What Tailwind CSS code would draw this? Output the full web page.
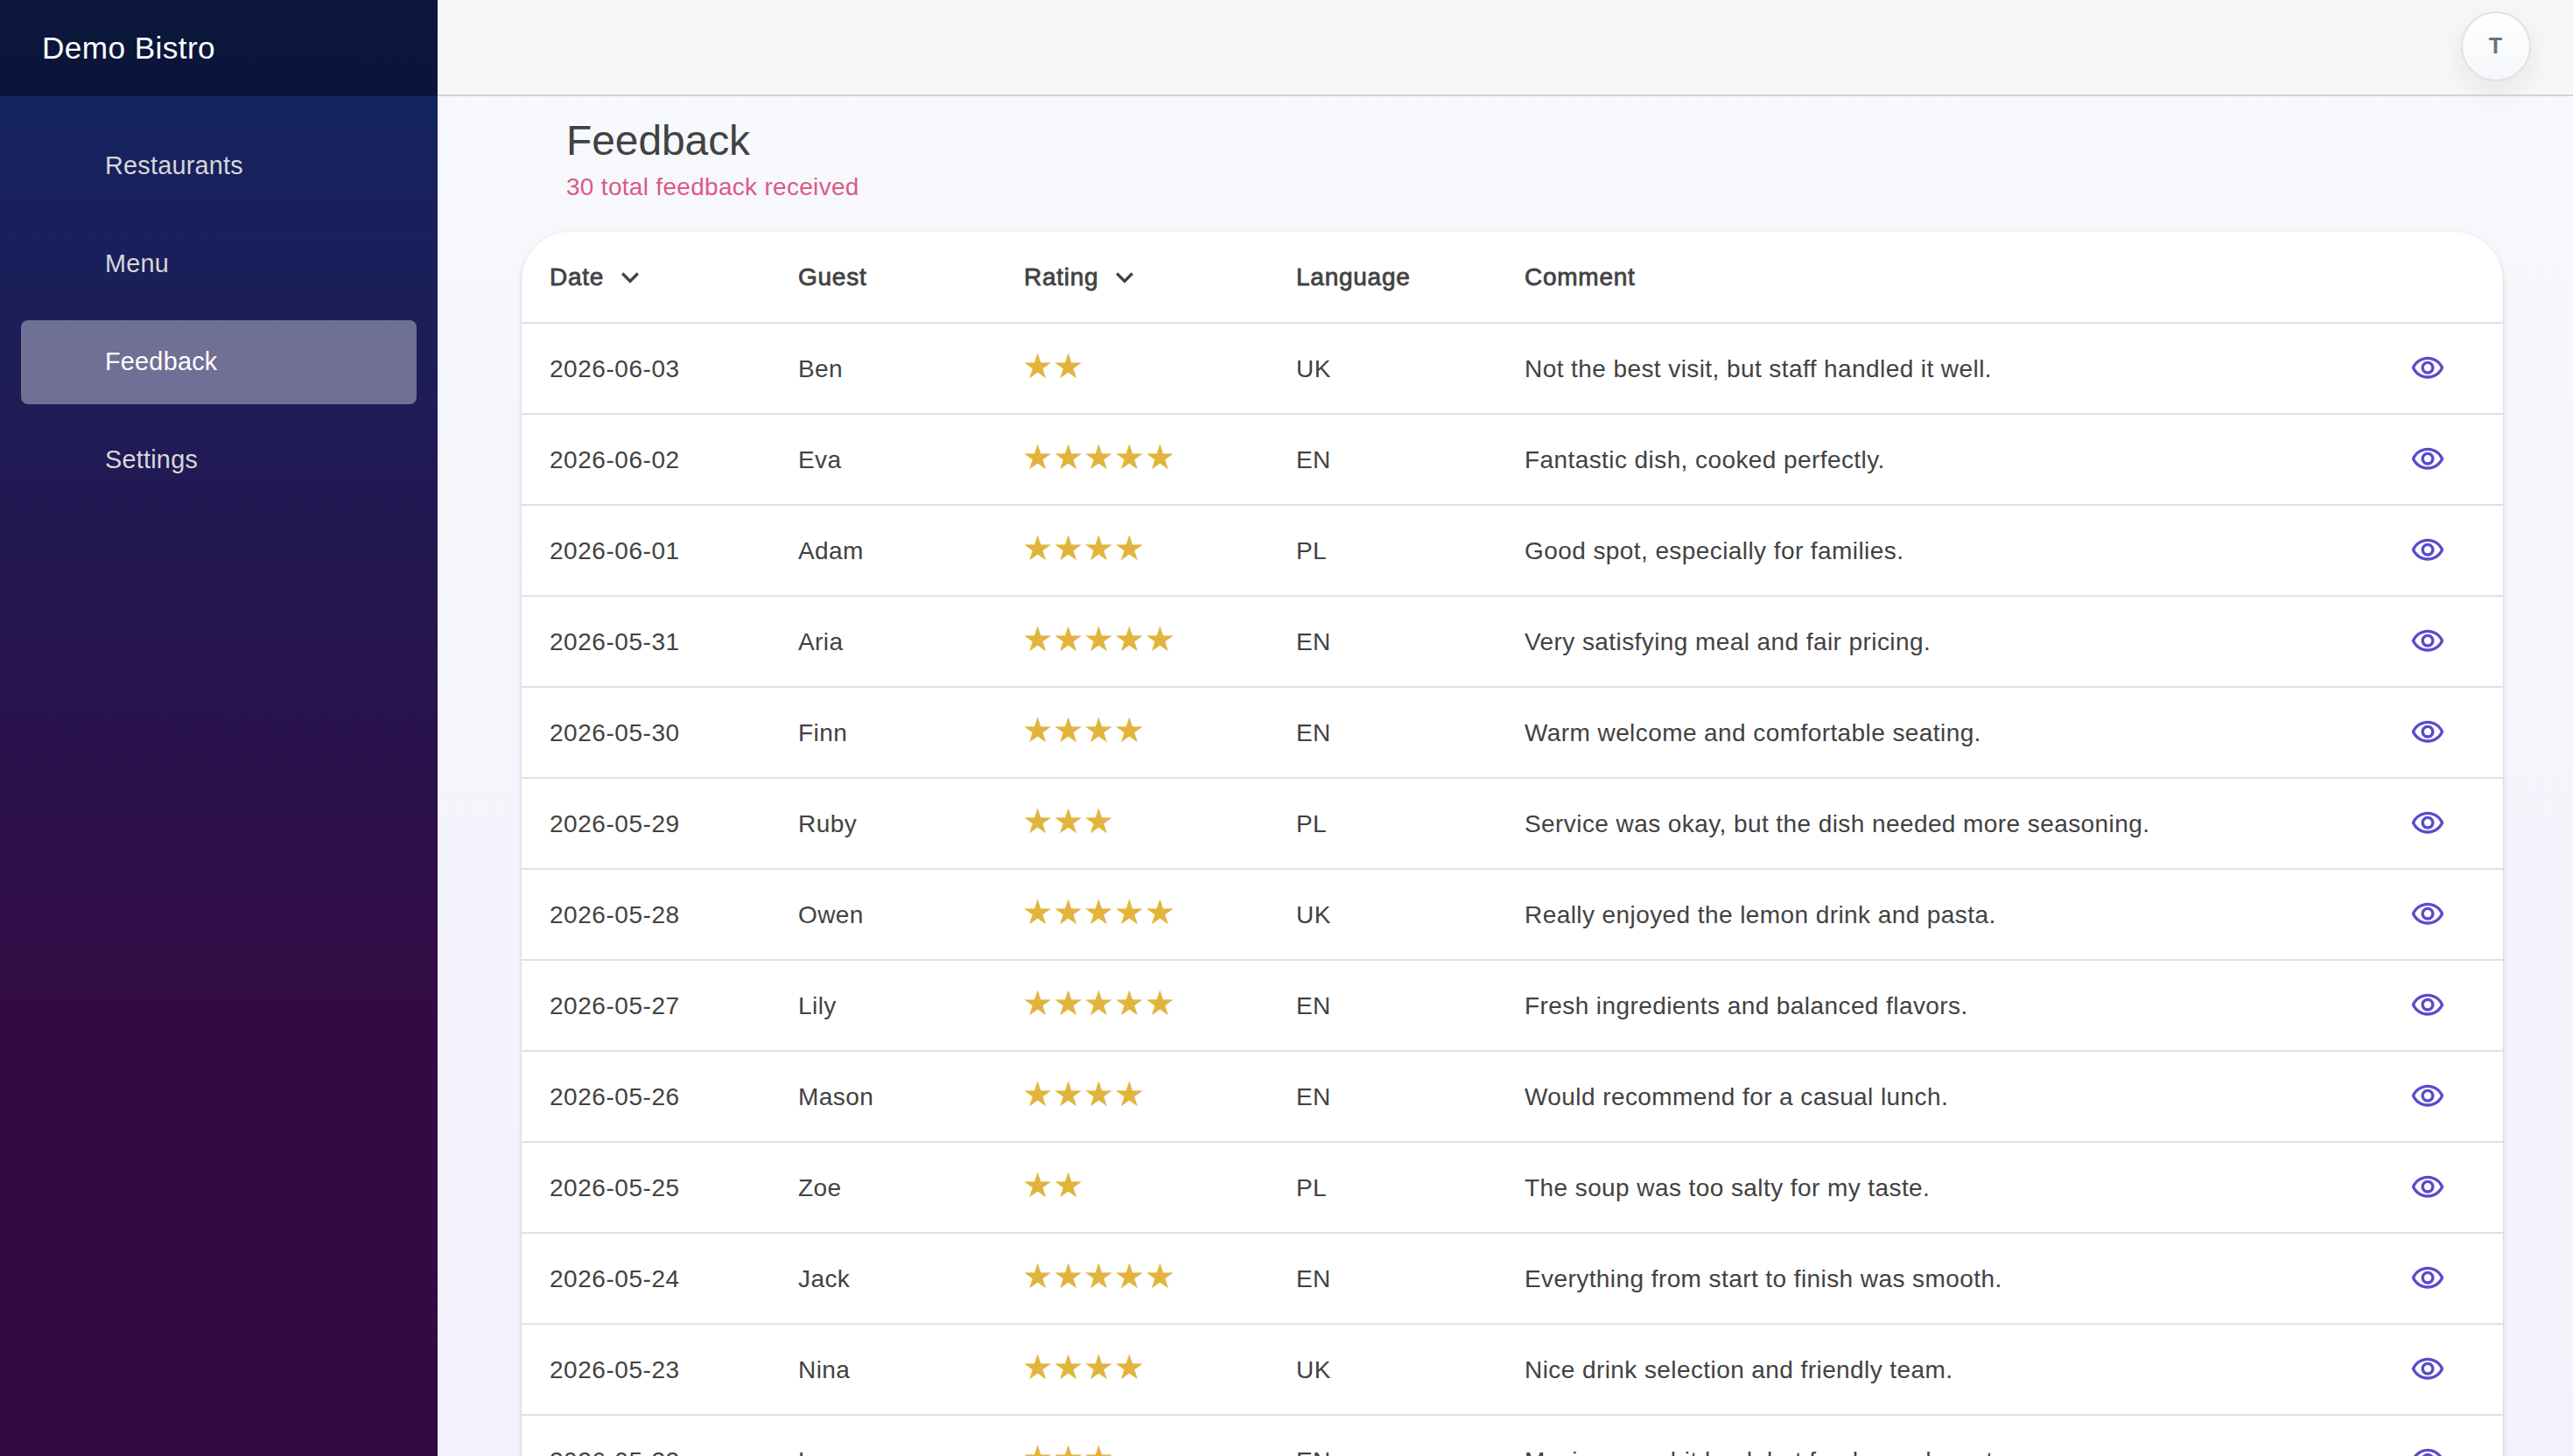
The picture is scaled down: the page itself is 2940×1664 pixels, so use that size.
<!DOCTYPE html>
<html lang="en">
<head>
  <meta charset="UTF-8">
  <meta name="viewport" content="width=device-width, initial-scale=1.0">
  <title>Feedback - Demo Bistro</title>
  <script src="https://cdn.jsdelivr.net/npm/@tailwindcss/browser@4"></script>
</head>
<body class="h-screen overflow-hidden font-['Liberation_Sans',Arial,sans-serif] text-[#424242]">
  <div class="flex h-full">

    <!-- Sidebar -->
    <aside class="flex w-[500px] shrink-0 flex-col bg-linear-[180deg,#112662_0%,#330b44_70%]">
      <div class="flex h-[110px] items-center bg-black/40 px-12">
        <a class="text-[35.2px] tracking-[0.4px] text-white">Demo Bistro</a>
      </div>
      <nav class="flex flex-col gap-4 px-6 pt-8 text-[28.8px] tracking-[0.25px] text-[#d7d7d7]">
        <a class="flex h-24 items-center rounded-lg pl-24">Restaurants</a>
        <a class="flex h-24 items-center rounded-lg pl-24">Menu</a>
        <a class="flex h-24 items-center rounded-lg bg-white/37 pl-24 text-white">Feedback</a>
        <a class="flex h-24 items-center rounded-lg pl-24">Settings</a>
      </nav>
    </aside>

    <main class="flex min-w-0 flex-1 flex-col bg-linear-[180deg,#f7f9fc_0%,#f2f2fc_100%]">
      <!-- Top bar -->
      <header class="flex h-[110px] shrink-0 justify-end border-b-2 border-[#d6d5d5] bg-[#f7f7f7] pt-[13px] pr-12">
        <button class="flex size-20 items-center justify-center rounded-full border-2 border-[#dfe1e5] bg-linear-[180deg,#ffffff,#f6f7fb] pr-px text-[25px] font-bold text-[#6d717a] shadow-[0_12px_32px_rgba(15,23,42,0.08)]">T</button>
      </header>

      <div class="flex flex-1 flex-col pr-20 pl-24">
        <div class="flex flex-col pt-[19px] pl-[51px]">
          <h1 class="text-[48px] leading-[64px] tracking-[-0.1px]">Feedback</h1>
          <p class="mt-px text-[28px] leading-[40px] tracking-[0.3px] text-[#dc5a87]">30 total feedback received</p>
        </div>

        <!-- Feedback table -->
        <div class="mt-[31px] rounded-t-[56px] bg-white shadow-[0_4px_2px_-2px_rgba(0,0,0,0.2),0_2px_2px_0_rgba(0,0,0,0.14),0_2px_6px_0_rgba(0,0,0,0.12)]">
          <div class="grid h-[105px] grid-cols-[284px_258px_311px_261px_1fr_140px] items-center border-b-2 border-[#e0e0e0] text-[28px] tracking-[0.75px] [-webkit-text-stroke:0.8px_#424242]">
            <div class="flex items-center pl-8">Date
              <svg class="ml-2.5 size-10" viewBox="0 0 24 24" fill="#424242"><path d="M7.41 8.59 12 13.17l4.59-4.58L18 10l-6 6-6-6z"/></svg>
            </div>
            <div class="pl-8">Guest</div>
            <div class="flex items-center pl-8">Rating
              <svg class="ml-2.5 size-10" viewBox="0 0 24 24" fill="#424242"><path d="M7.41 8.59 12 13.17l4.59-4.58L18 10l-6 6-6-6z"/></svg>
            </div>
            <div class="pl-8">Language</div>
            <div class="pl-8">Comment</div>
          </div>
          <div id="rows"></div>
        </div>
      </div>
    </main>
  </div>

  <script>
    const feedback = [
      ["2026-06-03", "Ben", 2, "UK", "Not the best visit, but staff handled it well."],
      ["2026-06-02", "Eva", 5, "EN", "Fantastic dish, cooked perfectly."],
      ["2026-06-01", "Adam", 4, "PL", "Good spot, especially for families."],
      ["2026-05-31", "Aria", 5, "EN", "Very satisfying meal and fair pricing."],
      ["2026-05-30", "Finn", 4, "EN", "Warm welcome and comfortable seating."],
      ["2026-05-29", "Ruby", 3, "PL", "Service was okay, but the dish needed more seasoning."],
      ["2026-05-28", "Owen", 5, "UK", "Really enjoyed the lemon drink and pasta."],
      ["2026-05-27", "Lily", 5, "EN", "Fresh ingredients and balanced flavors."],
      ["2026-05-26", "Mason", 4, "EN", "Would recommend for a casual lunch."],
      ["2026-05-25", "Zoe", 2, "PL", "The soup was too salty for my taste."],
      ["2026-05-24", "Jack", 5, "EN", "Everything from start to finish was smooth."],
      ["2026-05-23", "Nina", 4, "UK", "Nice drink selection and friendly team."],
      ["2026-05-22", "Leo", 3, "EN", "Music was a bit loud, but food was decent."],
    ];

    document.getElementById("rows").innerHTML = feedback.map(([date, guest, rating, language, comment]) => `
      <div class="grid h-[104px] grid-cols-[284px_258px_311px_261px_1fr_140px] items-center border-b-2 border-[#e0e0e0] text-[28px] tracking-[0.42px]">
        <div class="pt-0.5 pl-8 tracking-[0.55px]">${date}</div>
        <div class="pt-0.5 pl-8">${guest}</div>
        <div class="pb-1.5 pl-[30px] font-['DejaVu_Sans'] text-[39.5px] leading-[40px] tracking-[-0.5px] text-[#e2b43c]">${"★".repeat(rating)}</div>
        <div class="pt-0.5 pl-8">${language}</div>
        <div class="pt-0.5 pl-8">${comment}</div>
        <button class="flex pl-[34px]">
          <svg class="size-10" viewBox="0 0 24 24" fill="#5a4bcb"><path d="M12 6c3.79 0 7.17 2.13 8.82 5.5C19.17 14.87 15.79 17 12 17s-7.17-2.13-8.82-5.5C4.83 8.13 8.21 6 12 6m0-2C7 4 2.73 7.11 1 11.5 2.73 15.89 7 19 12 19s9.27-3.11 11-7.5C21.27 7.11 17 4 12 4zm0 5c1.38 0 2.5 1.12 2.5 2.5S13.38 14 12 14s-2.5-1.12-2.5-2.5S10.62 9 12 9m0-2c-2.48 0-4.5 2.02-4.5 4.5S9.52 16 12 16s4.5-2.02 4.5-4.5S14.48 7 12 7z"/></svg>
        </button>
      </div>`).join("");
  </script>
</body>
</html>
